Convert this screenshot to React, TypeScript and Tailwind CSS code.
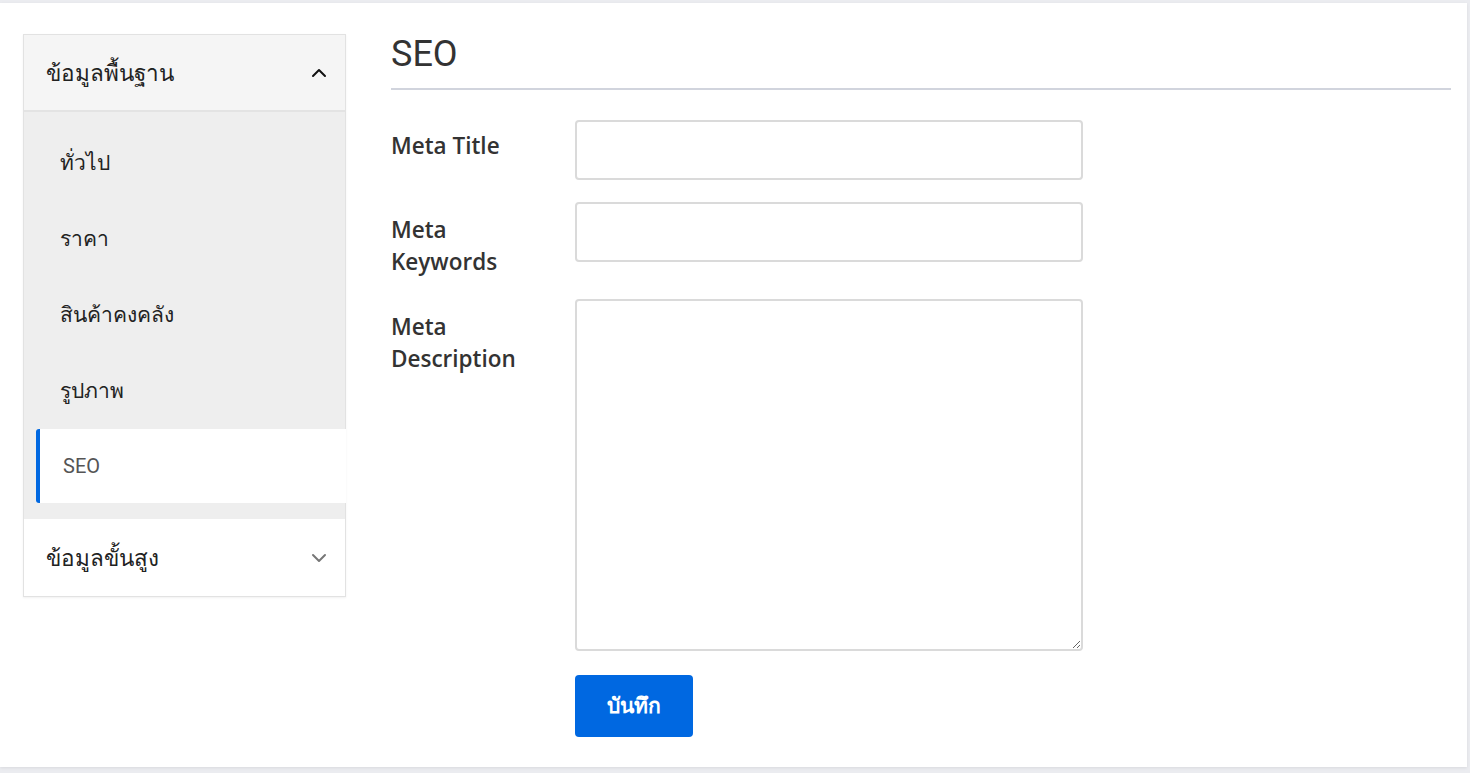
import { ChevronDown, ChevronUp } from 'lucide-react'

const menuItems = ['ทั่วไป', 'ราคา', 'สินค้าคงคลัง', 'รูปภาพ']

function Sidebar() {
  return (
    <aside className="w-[323px] shrink-0 self-start border border-[#e2e2e2] shadow-[0_1px_2px_rgba(0,0,0,0.06)]">
      {/* Basic info group */}
      <div className="flex h-[77px] items-center justify-between border-b-2 border-[#e3e3e3] bg-[#f5f5f5] pl-[22px] pr-[14px]">
        <span className="text-[22.5px] text-[#222]">ข้อมูลพื้นฐาน</span>
        <ChevronUp className="h-6 w-6 text-[#111]" strokeWidth={2} />
      </div>
      <div className="bg-[#eeeeee] pt-[13px] pb-[16px]">
        {menuItems.map((item) => (
          <div key={item} className="ml-[12px] flex h-[76px] items-center pl-[24px] text-[21px] text-[#222]">
            {item}
          </div>
        ))}
        <div className="-mr-px ml-[12px] flex h-[74px] items-center rounded-l-[3px] border-l-4 border-[#0068e1] bg-white pl-[23px] font-['Roboto',sans-serif] text-[20px] text-[#555]">
          SEO
        </div>
      </div>
      {/* Advanced group */}
      <div className="flex h-[77px] items-center justify-between bg-white pl-[22px] pr-[14px]">
        <span className="text-[22.5px] text-[#222]">ข้อมูลขั้นสูง</span>
        <ChevronDown className="h-6 w-6 text-[#777]" strokeWidth={2} />
      </div>
    </aside>
  )
}

function Field({ label, className, labelPad = 'pt-[10px]', children }: { label: React.ReactNode; className?: string; labelPad?: string; children: React.ReactNode }) {
  return (
    <div className={`flex ${className ?? ''}`}>
      <label className={`w-[184px] shrink-0 ${labelPad} text-[22.5px] font-semibold leading-[32px] text-[#333]`}>{label}</label>
      {children}
    </div>
  )
}

export default function App() {
  return (
    <div className="min-h-screen bg-[#ebecf0] pt-[3px] font-['Open_Sans','Noto_Sans',sans-serif]">
      <div className="flex h-[764px] w-[1467px] bg-white pl-[23px] pr-[16px] pt-[31px] shadow-[0_1px_3px_rgba(0,0,0,0.08)]">
        <Sidebar />

        <main className="ml-[45px] flex-1">
          <h2 className="border-b-2 border-[#d1d4dd] pb-[14px] font-['Roboto',sans-serif] text-[36px] leading-[40px] text-[#333]">
            SEO
          </h2>

          <div className="mt-[30px] flex flex-col">
            <Field label="Meta Title">
              <input className="h-[60px] w-[508px] rounded border-2 border-[#dadada] px-3 outline-none" />
            </Field>
            <Field label={<>Meta<br />Keywords</>} className="mt-[22px] h-[74px]" labelPad="pt-[12px]">
              <input className="h-[60px] w-[508px] self-start rounded border-2 border-[#dadada] px-3 outline-none" />
            </Field>
            <Field label={<>Meta<br />Description</>} className="mt-[23px]" labelPad="pt-[12px]">
              <textarea className="h-[352px] w-[508px] rounded border-2 border-[#dadada] px-3 py-2 outline-none" />
            </Field>
          </div>

          <button className="ml-[184px] mt-[24px] h-[62px] w-[118px] rounded bg-[#0068e1] text-[21px] font-semibold text-white">
            บันทึก
          </button>
        </main>
      </div>
    </div>
  )
}
